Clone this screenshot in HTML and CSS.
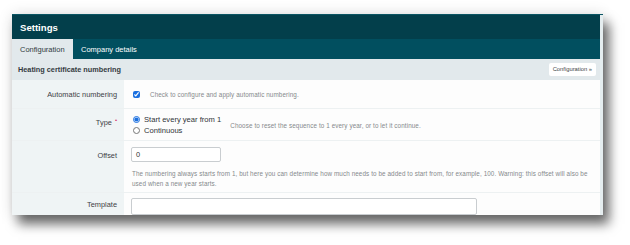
FILE: index.html
```html
<!DOCTYPE html>
<html lang="en">
<head>
<meta charset="utf-8">
<title>Settings</title>
<link rel="stylesheet" href="styles.css">
</head>
<body>
<div class="stage">
  <div class="panel">
    <div class="main">
      <div class="header">Settings</div>
      <div class="tabs">
        <div class="tab active">Configuration</div>
        <div class="tab">Company details</div>
      </div>
      <div class="section">
        <span class="section-title">Heating certificate numbering</span>
        <span class="section-btn">Configuration »</span>
      </div>
      <div class="row row-auto">
        <div class="label">Automatic numbering</div>
        <div class="field">
          <input type="checkbox" class="check" checked>
          <span class="help help-inline">Check to configure and apply automatic numbering.</span>
        </div>
      </div>
      <div class="row row-type">
        <div class="label">Type<span class="req">•</span></div>
        <div class="field">
          <div class="radios">
            <label class="radio"><input type="radio" name="t" checked><span>Start every year from 1</span></label>
            <label class="radio"><input type="radio" name="t"><span>Continuous</span></label>
          </div>
          <span class="help help-type">Choose to reset the sequence to 1 every year, or to let it continue.</span>
        </div>
      </div>
      <div class="row row-offset">
        <div class="label">Offset</div>
        <div class="field field-col">
          <div class="input small">0</div>
          <p class="help help-block">The numbering always starts from 1, but here you can determine how much needs to be added to start from, for example, 100. Warning: this offset will also be used when a new year starts.</p>
        </div>
      </div>
      <div class="row row-template">
        <div class="label">Template</div>
        <div class="field field-col">
          <div class="input wide"></div>
        </div>
      </div>
    </div>
    <div class="strip"></div>
  </div>
</div>
</body>
</html>
```
FILE: styles.css
```css
* { box-sizing: border-box; }
html, body { margin: 0; padding: 0; background: #ffffff; }
body {
  width: 630px;
  height: 245px;
  overflow: hidden;
  font-family: "Liberation Sans", Arial, sans-serif;
  color: #3b4044;
}
.stage {
  padding: 14px 0 0 12px;
}
.panel {
  width: 591px;
  height: 201px;
  display: flex;
  background: #e5edef;
  border-top: 1px solid #0a5563;
  box-shadow: 6px 9px 11px rgba(0, 0, 0, 0.58), 0 0 14px rgba(0, 0, 0, 0.12);
  overflow: hidden;
}
.main {
  width: 588px;
  background: #fdfdfd;
  display: flex;
  flex-direction: column;
}
.strip { flex: 1; }
.header {
  height: 24px;
  background: #033f4b;
  color: #ffffff;
  font-weight: bold;
  font-size: 9.6px;
  display: flex;
  align-items: center;
  padding-left: 8px;
}
.tabs {
  height: 20px;
  background: #014f5f;
  display: flex;
}
.tab {
  display: flex;
  align-items: center;
  padding: 0 8px;
  color: #ffffff;
  font-size: 7.5px;
}
.tab.active {
  width: 61px;
  background: #e2e9ec;
  color: #2f3a40;
}
.section {
  height: 21px;
  background: #e2e9ec;
  display: flex;
  align-items: center;
  justify-content: space-between;
  padding: 0 4px 0 6px;
}
.section-title {
  font-size: 7.3px;
  font-weight: bold;
  color: #343b3f;
}
.section-btn {
  background: #ffffff;
  border-radius: 2px;
  font-size: 5.8px;
  color: #3c4246;
  padding: 3px 4px;
  white-space: nowrap;
  line-height: 7px;
}
.row {
  display: grid;
  grid-template-columns: 112px 1fr;
  border-top: 1px solid #edf1f2;
}
.row-auto { border-top: none; height: 28px; }
.row-type { height: 32px; }
.row-offset { height: 52px; }
.row-template { height: 23px; }
.label {
  background: #eff4f5;
  font-size: 7.4px;
  color: #3e4245;
  text-align: right;
  padding-right: 7px;
  display: flex;
  align-items: center;
  justify-content: flex-end;
}
.row-type .label { align-items: flex-start; padding-top: 9px; }
.row-offset .label { align-items: flex-start; padding-top: 10px; }
.req {
  color: #d6336c;
  font-size: 6px;
  margin-left: 3px;
  position: relative;
  top: -1px;
}
.field {
  display: flex;
  align-items: center;
  padding-left: 7px;
}
.field-col {
  flex-direction: column;
  align-items: flex-start;
  justify-content: flex-start;
}
.check {
  width: 7px;
  height: 7px;
  margin: 0 0 0 2px;
  accent-color: #1a6fe0;
}
.help {
  font-size: 6.3px;
  color: #85898c;
  letter-spacing: 0.1px;
}
.help-inline { margin-left: 10px; }
.radios {
  display: flex;
  flex-direction: column;
  gap: 2px;
  padding-left: 2px;
}
.radio {
  display: flex;
  align-items: center;
  font-size: 7.6px;
  color: #2f3438;
  height: 9px;
}
.radio input {
  width: 7px;
  height: 7px;
  margin: 0 4px 0 0;
  accent-color: #1a6fe0;
}
.help-type { margin-left: 9px; margin-top: 2px; }
.input {
  height: 15px;
  border: 1px solid #c9cdd0;
  border-radius: 2px;
  background: #ffffff;
  font-size: 7.4px;
  color: #333;
  padding-left: 4px;
  display: flex;
  align-items: center;
}
.small { width: 90px; margin-top: 6px; }
.wide { width: 346px; margin-top: 5px; height: 17px; }
.help-block {
  margin: 7px 0 0 1px;
  width: 462px;
  line-height: 9.6px;
}
```
